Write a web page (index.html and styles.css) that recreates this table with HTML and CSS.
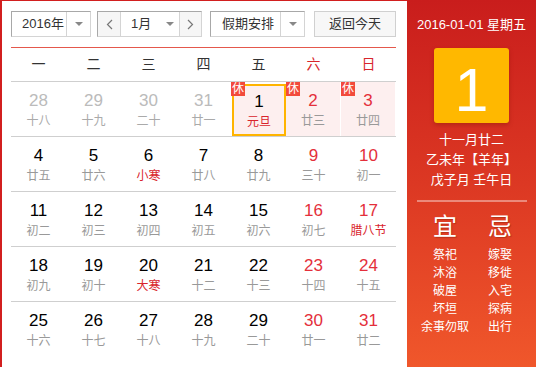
FILE: index.html
```html
<!DOCTYPE html>
<html lang="zh-CN">
<head>
<meta charset="utf-8">
<title>万年历</title>
<link rel="stylesheet" href="styles.css">
</head>
<body>
<div class="cal">
  <div class="main">
    <div class="toolbar">
      <div class="sel-box year">
        <span class="sel-text">2016年</span>
        <span class="sel-arrow"><i class="tri"></i></span>
      </div>
      <div class="sel-box month">
        <span class="nav"><svg width="7" height="11" viewBox="0 0 7 11"><polyline points="6,1 1.5,5.5 6,10" fill="none" stroke="#777" stroke-width="1.2"/></svg></span>
        <span class="sel-text m">1月</span>
        <span class="m-arrow"><i class="tri"></i></span>
        <span class="nav next"><svg width="7" height="11" viewBox="0 0 7 11"><polyline points="1,1 5.5,5.5 1,10" fill="none" stroke="#777" stroke-width="1.2"/></svg></span>
      </div>
      <div class="sel-box holiday">
        <span class="sel-text h">假期安排</span>
        <span class="sel-arrow"><i class="tri"></i></span>
      </div>
      <div class="today-btn">返回今天</div>
    </div>
    <div class="grid">
      <div class="weekdays">
        <span>一</span><span>二</span><span>三</span><span>四</span><span>五</span><span class="we">六</span><span class="we">日</span>
      </div>
      <div class="week">
        <div class="cell other"><b>28</b><em>十八</em></div>
        <div class="cell other"><b>29</b><em>十九</em></div>
        <div class="cell other"><b>30</b><em>二十</em></div>
        <div class="cell other"><b>31</b><em>廿一</em></div>
        <div class="cell rest sel"><span class="badge">休</span><b>1</b><em class="fest">元旦</em></div>
        <div class="cell rest we"><span class="badge">休</span><b>2</b><em>廿三</em></div>
        <div class="cell rest we"><span class="badge">休</span><b>3</b><em>廿四</em></div>
      </div>
      <div class="week">
        <div class="cell"><b>4</b><em>廿五</em></div>
        <div class="cell"><b>5</b><em>廿六</em></div>
        <div class="cell"><b>6</b><em class="fest">小寒</em></div>
        <div class="cell"><b>7</b><em>廿八</em></div>
        <div class="cell"><b>8</b><em>廿九</em></div>
        <div class="cell we"><b>9</b><em>三十</em></div>
        <div class="cell we"><b>10</b><em>初一</em></div>
      </div>
      <div class="week">
        <div class="cell"><b>11</b><em>初二</em></div>
        <div class="cell"><b>12</b><em>初三</em></div>
        <div class="cell"><b>13</b><em>初四</em></div>
        <div class="cell"><b>14</b><em>初五</em></div>
        <div class="cell"><b>15</b><em>初六</em></div>
        <div class="cell we"><b>16</b><em>初七</em></div>
        <div class="cell we"><b>17</b><em class="fest">腊八节</em></div>
      </div>
      <div class="week">
        <div class="cell"><b>18</b><em>初九</em></div>
        <div class="cell"><b>19</b><em>初十</em></div>
        <div class="cell"><b>20</b><em class="fest">大寒</em></div>
        <div class="cell"><b>21</b><em>十二</em></div>
        <div class="cell"><b>22</b><em>十三</em></div>
        <div class="cell we"><b>23</b><em>十四</em></div>
        <div class="cell we"><b>24</b><em>十五</em></div>
      </div>
      <div class="week last">
        <div class="cell"><b>25</b><em>十六</em></div>
        <div class="cell"><b>26</b><em>十七</em></div>
        <div class="cell"><b>27</b><em>十八</em></div>
        <div class="cell"><b>28</b><em>十九</em></div>
        <div class="cell"><b>29</b><em>二十</em></div>
        <div class="cell we"><b>30</b><em>廿一</em></div>
        <div class="cell we"><b>31</b><em>廿二</em></div>
      </div>
    </div>
  </div>
  <div class="side">
    <div class="side-date">2016-01-01 星期五</div>
    <div class="big-day">1</div>
    <div class="lunar">
      <div>十一月廿二</div>
      <div>乙未年【羊年】</div>
      <div>戊子月 壬午日</div>
    </div>
    <div class="sep"></div>
    <div class="yj">
      <div class="yj-col">
        <div class="yj-title">宜</div>
        <div>祭祀</div><div>沐浴</div><div>破屋</div><div>坏垣</div><div>余事勿取</div>
      </div>
      <div class="yj-col">
        <div class="yj-title">忌</div>
        <div>嫁娶</div><div>移徙</div><div>入宅</div><div>探病</div><div>出行</div>
      </div>
    </div>
  </div>
</div>
</body>
</html>
```
FILE: styles.css
```css
* { box-sizing: border-box; }
html, body { margin: 0; padding: 0; background: #fff; }
body {
  font-family: "Liberation Sans", Arial, "Noto Sans CJK SC", sans-serif;
  color: #333;
}
.cal {
  display: flex;
  width: 536px;
  height: 367px;
  overflow: hidden;
}
.main {
  width: 407px;
  height: 367px;
  border-left: 2px solid #d21f1f;
  border-top: 1px solid #d21f1f;
  padding: 10px 11px 0 9px;
}
.toolbar {
  display: flex;
  height: 26px;
}
.sel-box {
  display: flex;
  height: 26px;
  border: 1px solid;
  border-color: #a8a8a8 #d4d4d4 #d4d4d4 #a8a8a8;
  font-size: 13px;
  line-height: 24px;
  color: #333;
}
.year { width: 80px; }
.month { width: 105px; margin-left: 6px; }
.holiday { width: 95px; margin-left: 8px; }
.sel-text { flex: 1; padding-left: 10px; }
.sel-arrow {
  width: 24px;
  border-left: 1px solid #d4d4d4;
  display: flex;
  align-items: center;
  justify-content: center;
}
.tri {
  display: block;
  width: 0;
  height: 0;
  border-left: 4px solid transparent;
  border-right: 4px solid transparent;
  border-top: 4px solid #888;
}
.nav {
  width: 23px;
  background: #f6f6f6;
  display: flex;
  align-items: center;
  justify-content: center;
  border-right: 1px solid #d4d4d4;
}
.nav.next { border-right: 0; border-left: 1px solid #d4d4d4; width: 22px; }
.sel-text.m { flex: 0 0 auto; padding-left: 10px; width: 40px; }
.m-arrow {
  flex: 1;
  display: flex;
  align-items: center;
  justify-content: center;
}
.sel-text.h { padding-left: 11px; }
.today-btn {
  margin-left: 9px;
  width: 82px;
  height: 26px;
  border: 1px solid #d0d0d0;
  background: #f7f7f7;
  font-size: 13px;
  line-height: 24px;
  text-align: center;
  color: #333;
}
.grid {
  margin-top: 10px;
  width: 385px;
  border-top: 1px solid #e4584c;
}
.weekdays {
  display: grid;
  grid-template-columns: repeat(7, 55px);
  height: 34px;
  border-bottom: 1px solid #cfcfcf;
  font-size: 14px;
  line-height: 33px;
  text-align: center;
  color: #333;
}
.weekdays .we { color: #d8262c; }
.week {
  display: grid;
  grid-template-columns: repeat(7, 55px);
  height: 55px;
  border-bottom: 1px solid #cfcfcf;
}
.week.last { border-bottom: 0; }
.cell {
  position: relative;
  text-align: center;
  padding-top: 8px;
}
.cell b {
  display: block;
  font-weight: normal;
  font-size: 17px;
  line-height: 22px;
  color: #000;
}
.cell em {
  display: block;
  font-style: normal;
  font-size: 12px;
  line-height: 18px;
  color: #999;
}
.cell.we b { color: #e42f3b; }
.cell em.fest { color: #d9242c; }
.cell.other b { color: #bbb; }
.cell.other em { color: #aaa; }
.cell.rest {
  background: #fdefef;
  border-right: 1px solid #fff;
}
.cell.sel {
  margin: 2px 0 0 1px;
  padding-top: 6px;
  border: 2px solid #ffb400;
}
.cell.sel b { margin-top: -1px; }
.badge {
  position: absolute;
  top: 0;
  left: 0;
  width: 14px;
  height: 14px;
  background: #f24a3b;
  color: #fff;
  font-size: 12px;
  line-height: 14px;
  text-align: center;
}
.cell.sel .badge { top: -4px; left: -3px; }
.side {
  width: 129px;
  height: 367px;
  background: linear-gradient(to bottom, #c91d1c 0%, #dc3823 50%, #f0572b 100%);
  color: #fff;
  padding-top: 16px;
  text-align: center;
}
.side-date {
  font-size: 13px;
  line-height: 17px;
}
.big-day {
  width: 75px;
  height: 75px;
  margin: 15px auto 0;
  background: #ffb800;
  border-radius: 3px;
  box-shadow: 0 2px 4px rgba(120, 20, 0, 0.35);
  font-size: 61px;
  line-height: 65px;
  padding-top: 10px;
  color: #fff;
}
.lunar {
  margin-top: 7px;
  font-size: 13px;
  line-height: 20px;
  text-spacing-trim: space-all;
  font-feature-settings: "halt" 0, "palt" 0;
}
.sep {
  height: 2px;
  margin: 10px 9px 0 10px;
  background: rgba(255, 255, 255, 0.4);
}
.yj {
  display: grid;
  grid-template-columns: 76px 34px;
  margin-top: 10px;
  font-size: 12px;
  line-height: 18px;
}
.yj-col div { white-space: nowrap; }
.yj-col .yj-title {
  font-size: 24px;
  line-height: 30px;
  margin-bottom: 4px;
  text-shadow: 1px 1px 1px rgba(120, 30, 0, 0.4);
}
```
